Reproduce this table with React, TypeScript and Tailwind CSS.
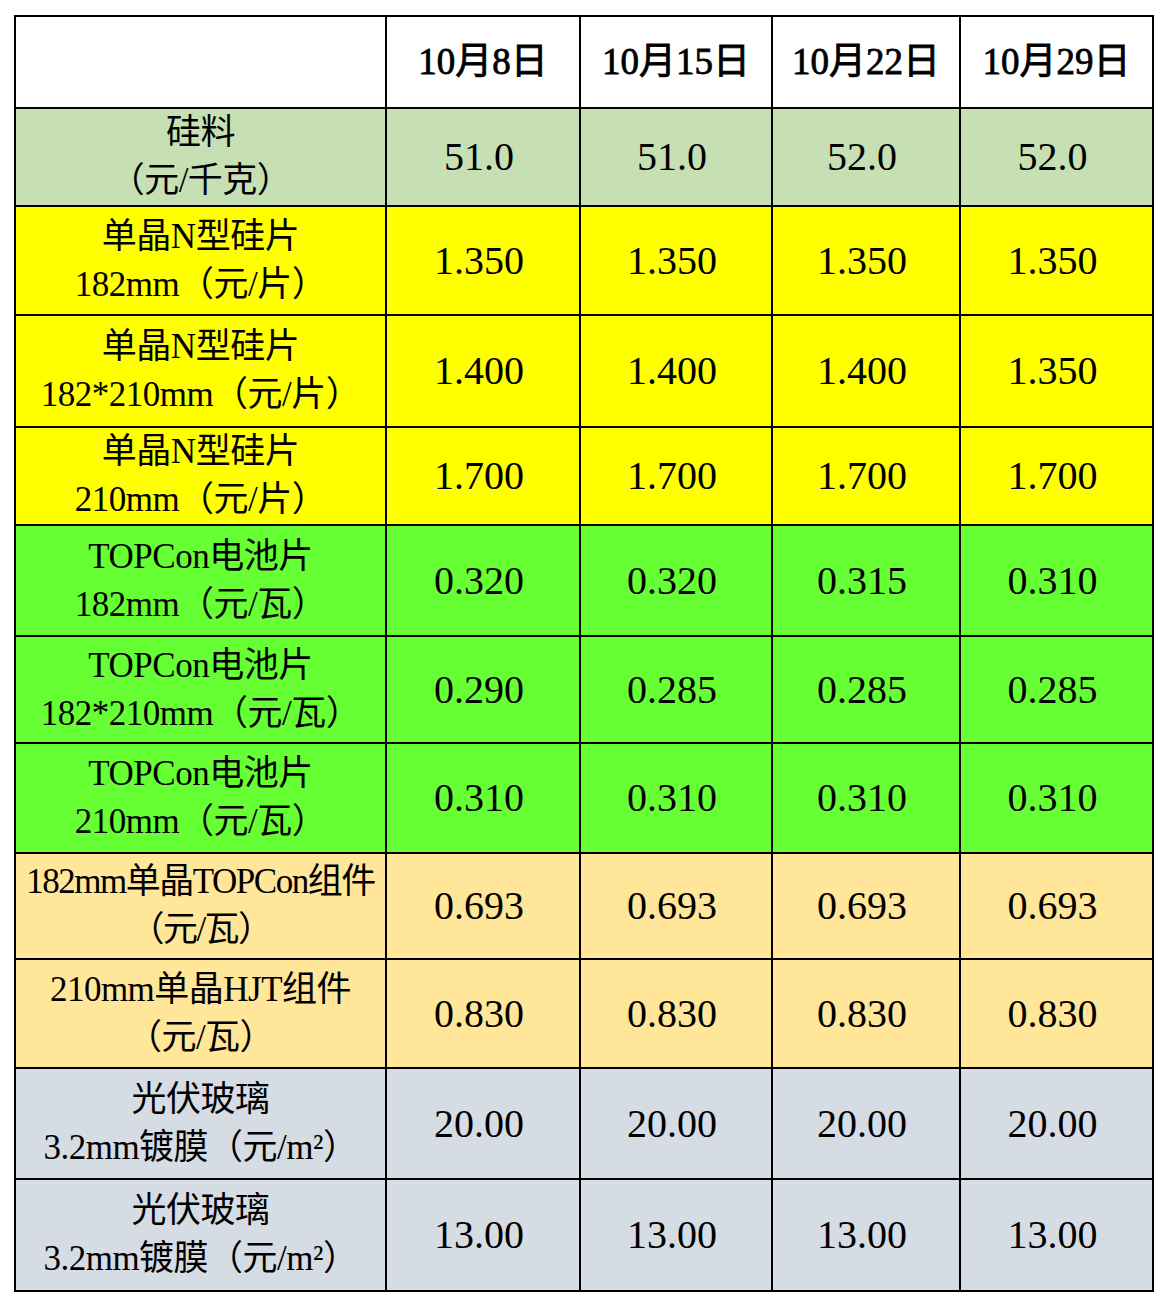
import React from 'react';

const dates = ['10月8日', '10月15日', '10月22日', '10月29日'];

const rows = [
  { label: ['硅料', '（元/千克）'], values: ['51.0', '51.0', '52.0', '52.0'], bg: 'bg-[#c6e0b4]', h: 'h-[98px]' },
  { label: ['单晶N型硅片', '182mm（元/片）'], values: ['1.350', '1.350', '1.350', '1.350'], bg: 'bg-[#ffff00]', h: 'h-[109px]' },
  { label: ['单晶N型硅片', '182*210mm（元/片）'], values: ['1.400', '1.400', '1.400', '1.350'], bg: 'bg-[#ffff00]', h: 'h-[112px]' },
  { label: ['单晶N型硅片', '210mm（元/片）'], values: ['1.700', '1.700', '1.700', '1.700'], bg: 'bg-[#ffff00]', h: 'h-[96px]' },
  { label: ['TOPCon电池片', '182mm（元/瓦）'], values: ['0.320', '0.320', '0.315', '0.310'], bg: 'bg-[#66ff33]', h: 'h-[111px]' },
  { label: ['TOPCon电池片', '182*210mm（元/瓦）'], values: ['0.290', '0.285', '0.285', '0.285'], bg: 'bg-[#66ff33]', h: 'h-[107px]' },
  { label: ['TOPCon电池片', '210mm（元/瓦）'], values: ['0.310', '0.310', '0.310', '0.310'], bg: 'bg-[#66ff33]', h: 'h-[110px]' },
  { label: ['182mm单晶TOPCon组件', '（元/瓦）'], values: ['0.693', '0.693', '0.693', '0.693'], bg: 'bg-[#ffe699]', h: 'h-[106px]', tight: true },
  { label: ['210mm单晶HJT组件', '（元/瓦）'], values: ['0.830', '0.830', '0.830', '0.830'], bg: 'bg-[#ffe699]', h: 'h-[109px]' },
  { label: ['光伏玻璃', '3.2mm镀膜（元/m²）'], values: ['20.00', '20.00', '20.00', '20.00'], bg: 'bg-[#d6dce4]', h: 'h-[111px]' },
  { label: ['光伏玻璃', '3.2mm镀膜（元/m²）'], values: ['13.00', '13.00', '13.00', '13.00'], bg: 'bg-[#d6dce4]', h: 'h-[112px]' },
];

const cell = 'border-2 border-black text-center align-middle p-0';

export default function App() {
  return (
    <div className="w-[1168px] h-[1304px] bg-white pt-[15px] pl-[14px] font-['Liberation_Serif','Noto_Sans_CJK_SC',serif] text-black">
      <table className="table-fixed border-collapse w-[1140px] text-[35px] leading-[48px]">
        <colgroup>
          <col className="w-[371px]" />
          <col className="w-[194px]" />
          <col className="w-[192px]" />
          <col className="w-[188px]" />
          <col className="w-[193px]" />
        </colgroup>
        <thead>
          <tr className="h-[92px] bg-white">
            <th className={cell}></th>
            {dates.map((d) => (
              <th key={d} className={`${cell} text-[37px] font-normal [-webkit-text-stroke:0.8px_black]`}>
                {d}
              </th>
            ))}
          </tr>
        </thead>
        <tbody>
          {rows.map((row, i) => (
            <tr key={i} className={`${row.h} ${row.bg}`}>
              <td className={`${cell} whitespace-nowrap ${row.tight ? 'tracking-[-1.5px]' : 'tracking-[-0.5px]'}`}>
                <div>{row.label[0]}</div>
                <div>{row.label[1]}</div>
              </td>
              {row.values.map((v, j) => (
                <td key={j} className={`${cell} text-[40px] pr-[8px]`}>
                  {v}
                </td>
              ))}
            </tr>
          ))}
        </tbody>
      </table>
    </div>
  );
}
